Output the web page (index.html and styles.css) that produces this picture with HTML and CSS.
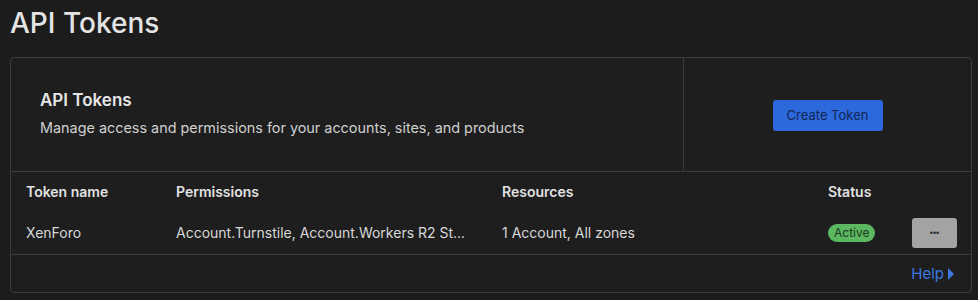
FILE: index.html
```html
<!DOCTYPE html>
<html lang="en">

<head>
    <meta charset="UTF-8">
    <meta name="viewport" content="width=device-width, initial-scale=1.0">
    <title>API Tokens</title>
    <link rel="stylesheet" href="styles.css">
</head>

<body>
    <h1 class="page-title">API Tokens</h1>
    <div class="card">
        <div class="card-top">
            <div class="intro">
                <h3>API Tokens</h3>
                <p>Manage access and permissions for your accounts, sites, and products</p>
            </div>
            <div class="actions">
                <button class="btn-create">Create Token</button>
            </div>
        </div>
        <div class="table">
            <div class="row head">
                <div>Token name</div>
                <div>Permissions</div>
                <div>Resources</div>
                <div>Status</div>
                <div></div>
            </div>
            <div class="row">
                <div>XenForo</div>
                <div>Account.Turnstile, Account.Workers R2 St...</div>
                <div>1 Account, All zones</div>
                <div><span class="badge">Active</span></div>
                <div><button class="btn-more">&bull;&bull;&bull;</button></div>
            </div>
        </div>
        <div class="card-foot">
            <a class="help" href="#">Help <svg width="8" height="14" viewBox="0 0 8 14"><path d="M1 1 L7 7 L1 13 Z" fill="currentColor"/></svg></a>
        </div>
    </div>
</body>

</html>
```

FILE: styles.css
```css
* {
    margin: 0;
    padding: 0;
    box-sizing: border-box;
}

body {
    background: #1c1c1c;
    color: #e2e2e2;
    font-family: Inter, "Noto Sans", sans-serif;
    padding: 0 6px 0 10px;
}

.page-title {
    font-size: 28px;
    font-weight: 500;
    color: #e4e4e4;
    padding-top: 6px;
    height: 57px;
}

.card {
    border: 1px solid #3a3a3a;
    border-radius: 4px;
    background: #1e1e1e;
}

.card-top {
    display: flex;
    height: 114px;
    border-bottom: 1px solid #3a3a3a;
}

.intro {
    width: 673px;
    border-right: 1px solid #3a3a3a;
    padding: 32px 0 0 29px;
}

.intro h3 {
    font-size: 17px;
    font-weight: 600;
    color: #e6e6e6;
}

.intro p {
    font-size: 14.4px;
    color: #cfcfcf;
    margin-top: 9px;
}

.actions {
    flex: 1;
    display: flex;
    align-items: center;
    justify-content: center;
}

.btn-create {
    background: #2b69dd;
    color: #132654;
    border: 0;
    border-radius: 3px;
    font-family: inherit;
    font-size: 13px;
    width: 110px;
    height: 31px;
    margin-top: 1px;
}

.row {
    display: grid;
    grid-template-columns: 150px 326px 326px 84px 45px;
    align-items: center;
    padding-left: 15px;
    font-size: 14px;
    color: #d8d8d8;
    white-space: nowrap;
}

.row.head {
    height: 39px;
    font-weight: 600;
    color: #e2e2e2;
}

.row:not(.head) {
    height: 44px;
    border-bottom: 1px solid #3a3a3a;
}

.badge {
    display: inline-block;
    background: #5bb760;
    color: #1d3a1f;
    font-size: 12px;
    border-radius: 9px;
    padding: 1px 6px;
    line-height: 16px;
}

.btn-more {
    width: 45px;
    height: 30px;
    background: #a3a3a3;
    border: 0;
    border-radius: 3px;
    color: #2a2a2a;
    font-size: 9px;
}

.card-foot {
    height: 37px;
    display: flex;
    justify-content: flex-end;
    align-items: center;
    padding-right: 16px;
}

.help {
    color: #3b78e0;
    text-decoration: none;
    font-size: 15px;
    display: flex;
    align-items: center;
    gap: 3px;
}
```
